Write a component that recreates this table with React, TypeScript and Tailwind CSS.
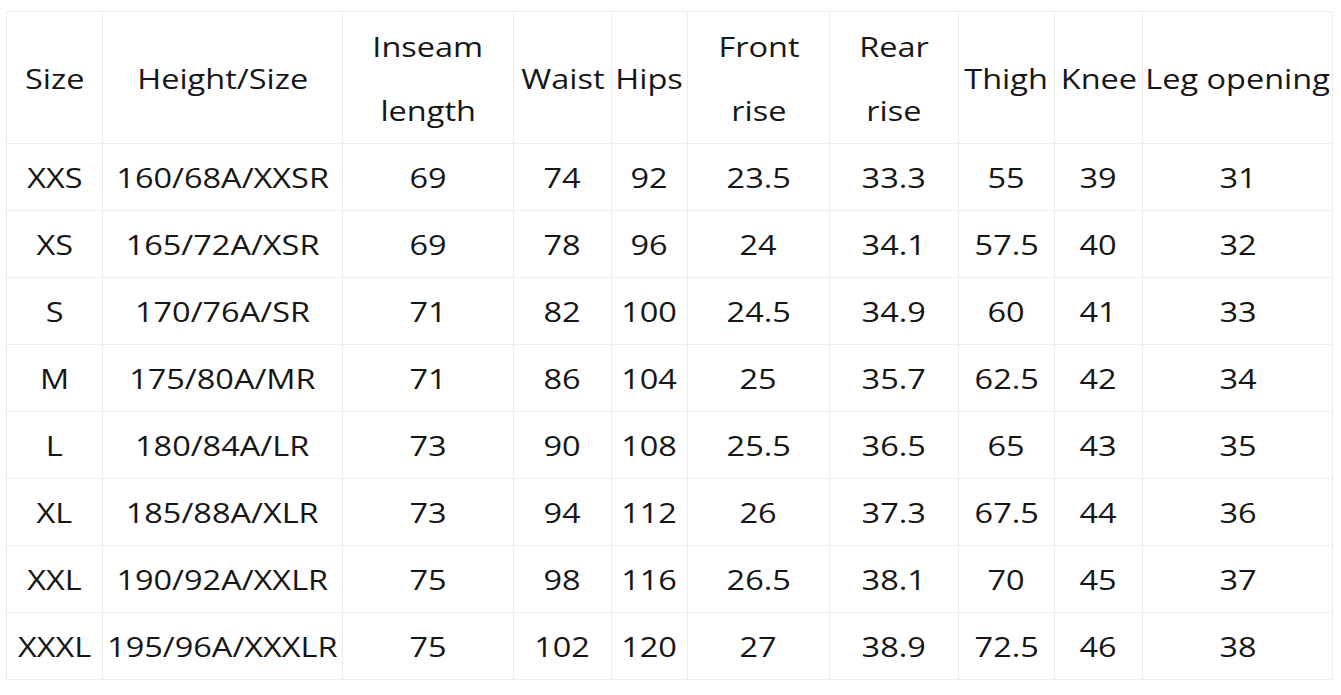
const headers = [
  ['Size'],
  ['Height/Size'],
  ['Inseam', 'length'],
  ['Waist'],
  ['Hips'],
  ['Front', 'rise'],
  ['Rear', 'rise'],
  ['Thigh'],
  ['Knee'],
  ['Leg opening'],
];

const rows = [
  ['XXS', '160/68A/XXSR', '69', '74', '92', '23.5', '33.3', '55', '39', '31'],
  ['XS', '165/72A/XSR', '69', '78', '96', '24', '34.1', '57.5', '40', '32'],
  ['S', '170/76A/SR', '71', '82', '100', '24.5', '34.9', '60', '41', '33'],
  ['M', '175/80A/MR', '71', '86', '104', '25', '35.7', '62.5', '42', '34'],
  ['L', '180/84A/LR', '73', '90', '108', '25.5', '36.5', '65', '43', '35'],
  ['XL', '185/88A/XLR', '73', '94', '112', '26', '37.3', '67.5', '44', '36'],
  ['XXL', '190/92A/XXLR', '75', '98', '116', '26.5', '38.1', '70', '45', '37'],
  ['XXXL', '195/96A/XXXLR', '75', '102', '120', '27', '38.9', '72.5', '46', '38'],
];

export default function App() {
  return (
    <div className="w-[1341px] h-[695px] bg-white pt-[11px] pl-[6px] text-[#161616] text-[28px]" style={{ fontFamily: '"Open Sans", "Noto Sans", sans-serif' }}>
      <div className="grid w-[1327px] grid-cols-[96px_240px_171px_98px_76px_142px_129px_96px_88px_191px] border-r border-b border-[#ececec]">
        {headers.map((h, i) => (
          <div key={i} className="h-[132px] flex flex-col items-center justify-center border-l border-t border-[#ececec] leading-[64px] whitespace-nowrap">
            {h.map((line) => (
              <span key={line} className="scale-x-[1.16]">{line}</span>
            ))}
          </div>
        ))}
        {rows.map((r, ri) =>
          r.map((c, ci) => (
            <div key={`${ri}-${ci}`} className="h-[67px] flex items-center justify-center border-l border-t border-[#ececec] whitespace-nowrap">
              <span className="scale-x-[1.16]">{c}</span>
            </div>
          )),
        )}
      </div>
    </div>
  );
}
